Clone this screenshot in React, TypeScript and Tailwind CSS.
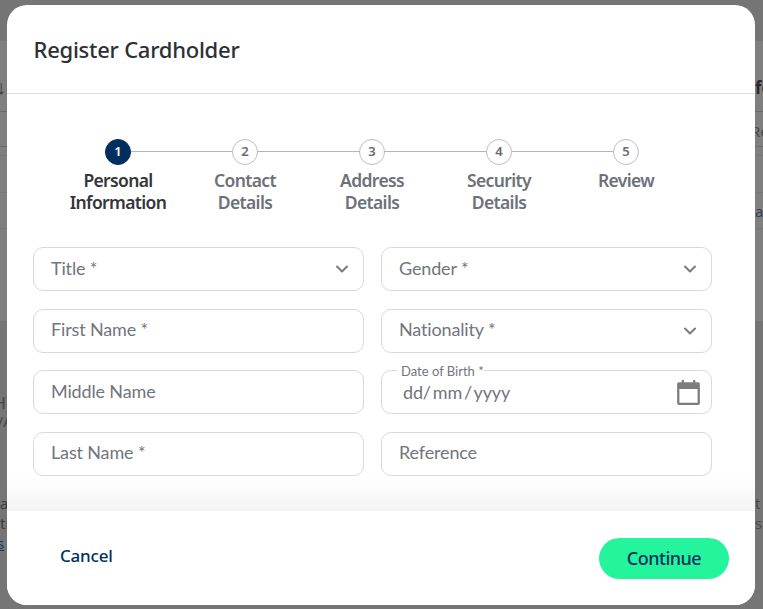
import React from 'react';
import { ChevronDown } from 'lucide-react';

const steps = [
  { n: '1', label: ['Personal', 'Information'], active: true },
  { n: '2', label: ['Contact', 'Details'] },
  { n: '3', label: ['Address', 'Details'] },
  { n: '4', label: ['Security', 'Details'] },
  { n: '5', label: ['Review'] },
];

const Field = ({ label, select }: { label: string; select?: boolean }) => (
  <div className="flex h-[44px] items-center justify-between rounded-[10px] border border-[#d9d9d9] bg-white pb-[2px] pl-[17px] pr-[11px] font-['Lato',sans-serif] text-[18px] tracking-[-0.15px] text-[#71757d]">
    <span>{label}</span>
    {select && <ChevronDown size={20} strokeWidth={2.5} className="mt-[2px] text-[#7d7d7d]" />}
  </div>
);

const DateField = () => (
  <div className="relative flex h-[44px] items-center justify-between rounded-[10px] border border-[#d9d9d9] bg-white pl-[21px] pr-[11px] font-['Lato',sans-serif] text-[18px] tracking-[-0.15px] text-[#71757d]">
    <span className="absolute left-[15px] top-[-7px] bg-white pl-[4px] text-[13px] leading-[15px] tracking-normal">Date of Birth *</span>
    <span className="[word-spacing:-2.5px]">dd/ mm / yyyy</span>
    <svg width="23" height="25" viewBox="2 1 20 22" fill="#7d7d7d">
      <path d="M6 1h2v2h8V1h2v2h2.500A1.500 1.500 0 0 1 22 4.500v17a1.500 1.500 0 0 1-1.500 1.500h-17A1.500 1.500 0 0 1 2 21.500v-17A1.500 1.500 0 0 1 3.500 3H6V1zM4 9v12h16V9H4z" />
    </svg>
  </div>
);

const Step = ({ n, label, active }: { n: string; label: string[]; active?: boolean }) => (
  <div className="relative z-10 flex w-[127px] flex-col items-center">
    <div className={`flex h-[26px] w-[26px] items-center justify-center rounded-full border pl-px text-[13px] font-semibold ${active ? 'border-[#002f5f] bg-[#002f5f] text-white' : 'border-[#bdbdbd] bg-white text-[#666a72]'}`}>
      {n}
    </div>
    <div className={`mt-[4px] pl-px text-center text-[17.5px] font-semibold leading-[22px] tracking-[-0.65px] ${active ? 'text-[#33363b]' : 'text-[#6d7179]'}`}>
      {label.map((l) => (
        <div key={l}>{l}</div>
      ))}
    </div>
  </div>
);

export default function App() {
  return (
    <div className="relative h-[609px] w-[763px] overflow-hidden bg-[#757575] pt-[5px] pl-[7px] font-['Noto_Sans',sans-serif]">
      {/* page behind the overlay */}
      <div className="absolute inset-x-0 top-[41px] h-[280px] bg-[#7f7f7f]" />
      <div className="absolute inset-x-0 top-[111px] h-px bg-[#6a6a6a]" />
      <div className="absolute inset-x-0 top-[146px] h-px bg-[#6a6a6a]" />
      <div className="absolute inset-x-0 top-[155px] h-px bg-[#767676]" />
      <div className="absolute inset-x-0 top-[192px] h-px bg-[#767676]" />
      <div className="absolute inset-x-0 top-[228px] h-px bg-[#767676]" />
      <div className="absolute left-[-4px] top-[72px] text-[20px] font-bold text-[#3c3c3c]">↓</div>
      <div className="absolute left-[-6px] top-[391px] text-[16px] text-[#444]">H</div>
      <div className="absolute left-[-2px] top-[411px] text-[14px] text-[#444]">/A</div>
      <div className="absolute left-0 top-[492px] text-[15px] text-[#3c3c3c]">a</div>
      <div className="absolute left-0 top-[512px] text-[15px] text-[#3c3c3c]">ti</div>
      <div className="absolute left-[-3px] top-[532px] text-[15px] text-[#123a66] underline">s</div>
      <div className="absolute left-[755px] top-[75px] text-[17px] font-bold text-[#2a2a2a]">fo</div>
      <div className="absolute left-[751px] top-[120px] text-[15px] text-[#4a4a4a]">Re</div>
      <div className="absolute left-[755px] top-[200px] text-[15px] text-[#3a3a5a]">a</div>
      <div className="absolute left-[755px] top-[492px] text-[15px] text-[#4a4a4a]">t</div>
      <div className="absolute left-[755px] top-[512px] text-[15px] text-[#4a4a4a]">st</div>

      <div className="relative flex h-[600px] w-[748px] flex-col overflow-hidden rounded-[20px] bg-white">
        <div className="flex h-[89px] shrink-0 items-start border-b border-[#dcdcdc] pl-[26.500px] pt-[27px] text-[22px] font-medium leading-[34px] tracking-[-0.25px] text-[#2d3034]">
          Register Cardholder
        </div>

        <div className="relative mt-[45px] flex px-[47px]">
          <div className="absolute left-[111px] right-[129px] top-[12px] h-px bg-[#b5b5b5]" />
          {steps.map((s) => (
            <Step key={s.n} {...s} />
          ))}
        </div>

        <div className="mt-[34px] grid grid-cols-[331px_331px] gap-x-[17px] gap-y-[17.500px] px-[26px]">
          <Field label="Title *" select />
          <Field label="Gender *" select />
          <Field label="First Name *" />
          <Field label="Nationality *" select />
          <Field label="Middle Name" />
          <DateField />
          <Field label="Last Name *" />
          <Field label="Reference" />
        </div>

        <div className="flex-1 bg-gradient-to-b from-white to-[#f4f4f4]" />

        <div className="flex h-[94px] shrink-0 items-center justify-between bg-white pl-[53px] pr-[26px]">
          <span className="mb-[4px] text-[17px] font-medium tracking-[-0.2px] text-[#002f5f]">Cancel</span>
          <button className="h-[41px] w-[130px] rounded-full bg-[#24f59c] text-[18px] font-medium tracking-[-0.5px] text-[#002f5f]">
            Continue
          </button>
        </div>
      </div>
    </div>
  );
}
